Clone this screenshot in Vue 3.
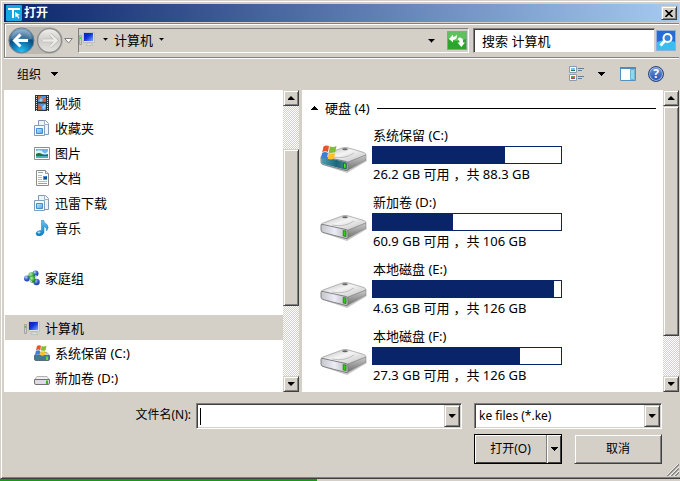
<script setup>
import { ref } from 'vue'

const libraries = [
  { name: '视频', icon: 'film' },
  { name: '收藏夹', icon: 'folderdoc' },
  { name: '图片', icon: 'picture' },
  { name: '文档', icon: 'document' },
  { name: '迅雷下载', icon: 'folderdoc' },
  { name: '音乐', icon: 'music' },
]
const volumes = [
  { name: '系统保留 (C:)', icon: 'sysdisk' },
  { name: '新加卷 (D:)', icon: 'smalldisk' },
]
const drives = [
  { name: '系统保留 (C:)', free: 26.2, total: 88.3, system: true },
  { name: '新加卷 (D:)', free: 60.9, total: 106 },
  { name: '本地磁盘 (E:)', free: 4.63, total: 126 },
  { name: '本地磁盘 (F:)', free: 27.3, total: 126 },
]
const used = (d) => `${(1 - d.free / d.total) * 100}%`
const query = ref('')
const fileName = ref('')
const fileType = ref('ke')
</script>

<template>
  <svg class="defs" aria-hidden="true">
    <defs>
      <linearGradient id="gTop" x1="0" y1="0" x2="1" y2="1">
        <stop offset="0" stop-color="#b4b4b4" /><stop offset=".45" stop-color="#f4f4f4" /><stop offset="1" stop-color="#bdbdbd" />
      </linearGradient>
      <linearGradient id="gFront" x1="0" y1="0" x2="1" y2="0">
        <stop offset="0" stop-color="#c4c4cc" /><stop offset=".5" stop-color="#ececf6" /><stop offset="1" stop-color="#b4b4bc" />
      </linearGradient>
      <linearGradient id="gTeal" x1="0" y1="0" x2="1" y2="0">
        <stop offset="0" stop-color="#4d9fb4" /><stop offset=".6" stop-color="#1d6678" /><stop offset="1" stop-color="#4b8d98" />
      </linearGradient>
      <linearGradient id="gSide" x1="0" y1="0" x2="0" y2="1">
        <stop offset="0" stop-color="#c9c9c9" /><stop offset="1" stop-color="#6f6f6f" />
      </linearGradient>
      <linearGradient id="gScreen" x1="0" y1="0" x2="1" y2="1">
        <stop offset="0" stop-color="#0a1cc0" /><stop offset=".45" stop-color="#1130dc" /><stop offset="1" stop-color="#7da4ff" />
      </linearGradient>
      <linearGradient id="gSky" x1="0" y1="0" x2="1" y2="1">
        <stop offset="0" stop-color="#cdeaff" /><stop offset="1" stop-color="#4aa4ee" />
      </linearGradient>
      <linearGradient id="gNote" x1="0" y1="0" x2="0" y2="1">
        <stop offset="0" stop-color="#6cc4ee" /><stop offset="1" stop-color="#087ac6" />
      </linearGradient>
      <radialGradient id="gBack" cx=".5" cy=".95" r=".95">
        <stop offset="0" stop-color="#25c4f0" /><stop offset=".4" stop-color="#0b78b4" /><stop offset=".62" stop-color="#0a4a7c" /><stop offset="1" stop-color="#8fb8d4" />
      </radialGradient>
      <linearGradient id="gFwd" x1="0" y1="0" x2="0" y2="1">
        <stop offset="0" stop-color="#f0efed" /><stop offset=".5" stop-color="#cfcdc9" /><stop offset="1" stop-color="#e6e4e0" />
      </linearGradient>
      <radialGradient id="gBall" cx=".35" cy=".3" r=".8">
        <stop offset="0" stop-color="#b9d0ff" /><stop offset=".5" stop-color="#3a62cc" /><stop offset="1" stop-color="#12318c" />
      </radialGradient>
      <radialGradient id="gGreenBall" cx=".35" cy=".3" r=".8">
        <stop offset="0" stop-color="#b4f09c" /><stop offset=".6" stop-color="#2ea030" /><stop offset="1" stop-color="#13661c" />
      </radialGradient>
    </defs>
    <symbol id="flag" viewBox="0 0 16 15">
      <path d="M2.500 1.500Q5-.3 8 1L7 7Q4 5.500 1.200 7.200z" fill="#e4562a" />
      <path d="M8.800 1.300Q12 2.700 15.500 1L14.300 7Q11 8.500 7.900 7.300z" fill="#84bc34" />
      <path d="M1 8Q4 6.300 6.900 7.900L6 13.500Q3 12.200 0 14z" fill="#3d7fd8" />
      <path d="M7.700 8.200Q11 9.500 14.100 8L13 13.600Q10 15.300 6.700 13.800z" fill="#fcc02c" />
    </symbol>
    <symbol id="drive" viewBox="0 0 48 28">
      <path d="M3 18L27 26 47 14 45 11 26 22z" fill="#000" opacity=".22" />
      <path d="M1 10Q1 8.500 3 8L22 1Q25-.2 28 .8L44 5.500Q46 6.500 46 8L27 15.500z" fill="url(#gTop)" stroke="#8b8b8b" stroke-width=".6" />
      <path d="M27 15.500L46 8V13L27 23.500z" fill="url(#gSide)" stroke="#777" stroke-width=".5" />
      <path d="M1 10.500Q1 9 3 9.500L26 14.500Q28 15 28 17V22Q28 24 26 23.500L3 17.500Q1 17 1 15z" fill="url(#gFront)" stroke="#777" stroke-width=".9" />
      <path d="M12 10Q25 12.500 34 6" fill="none" stroke="#aaa" stroke-width=".7" />
      <ellipse cx="25" cy="2.200" rx="2.800" ry="1" fill="#666" />
      <path d="M23.200 15.500L26 16V21.500L23.200 21z" fill="#32ce0e" stroke="#246b16" stroke-width=".7" />
    </symbol>
    <symbol id="sysdrive" viewBox="0 0 48 30">
      <use href="#drive" y="2" width="48" height="28" />
      <path d="M1.500 13Q2 11.500 4 12L25.500 17Q27 17.500 27 19V23.500Q27 25 25 24.500L3.500 19Q1.500 18.500 1.500 17z" fill="url(#gTeal)" />
      <path d="M23.500 18L26 18.500V23.500L23.500 23z" fill="#48ee15" stroke="#17541d" stroke-width=".7" />
      <use href="#flag" x="1" y="0" width="16" height="15" />
    </symbol>
    <symbol id="film" viewBox="0 0 16 16">
      <path d="M1 0H15V16H1z" fill="#2c3440" />
      <path d="M4 1H12V7H4zM4 8.500H12V15H4z" fill="#4a96e4" />
      <path d="M4 1H7L6 4 4 5zM8 4L12 2V7H7zM4 9L7 11 8 15H4zM10 10L12 9V12z" fill="#c36443" />
      <path d="M5 5L7 3 9 5 7 7zM8 12L11 9 12 11 10 15z" fill="#8ed2f5" />
      <path d="M2.500 1V16M13.500 1V16" stroke="#d5e6e0" stroke-width="1" stroke-dasharray="1 1" />
    </symbol>
    <symbol id="folderdoc" viewBox="0 0 16 16">
      <path d="M4.500 .5H11.500L14.500 3.500V14.500H4.500z" fill="#eef4fa" stroke="#8199b2" />
      <path d="M10.500 .5V4.500H14.500" stroke="#9fb3c6" fill="#fff" />
      <path d="M.5 5.500H10.500V15.500H.5z" fill="#f6fbff" stroke="#7f9dbc" />
      <path d="M2.500 8.500H8.500V13.500H2.500z" fill="url(#gSky)" stroke="#438dcc" />
    </symbol>
    <symbol id="picture" viewBox="0 0 16 16">
      <path d="M.5 2.500H15.500V14.500H.5z" fill="#fff" stroke="#8d8d8d" />
      <path d="M2 4H14V13H2z" fill="#6eb4ec" />
      <path d="M2 6Q7 4 9 7T14 6V9H2z" fill="#ddf1f8" />
      <path d="M2 9Q5 7 8 9T14 9V11H2z" fill="#276f43" />
      <path d="M2 11H14V13H2z" fill="#49b1b4" />
    </symbol>
    <symbol id="document" viewBox="0 0 16 16">
      <path d="M2.500 .5H11.500L14.500 3.500V15.500H2.500z" fill="#fff" stroke="#8b8b8b" />
      <path d="M11.500 .5V3.500H14.500" fill="#eee" stroke="#999" />
      <path d="M4 2.500H9M4 13.500H13" stroke="#86b09c" />
      <path d="M4 5.500H8M4 7.500H8M4 9.500H8M4 11.500H13" stroke="#b5b4da" />
      <path d="M9 6H13V10H9z" fill="#4b9be0" /><path d="M10 7L13 6.500V9H10z" fill="#184e82" />
    </symbol>
    <symbol id="music" viewBox="0 0 16 16">
      <path d="M7.500 0H9.500Q10 3 13 4.500Q15.500 7.500 12.500 11Q13 7.500 10 6.500V12.500Q9 15.500 5.500 16Q2 16 2 13.500Q2.500 10.500 7.500 10.500z" fill="url(#gNote)" stroke="#187cb8" stroke-width=".5" />
      <ellipse cx="5" cy="12.500" rx="1.500" ry="1" fill="#a5e0f8" />
    </symbol>
    <symbol id="homegroup" viewBox="0 0 16 16">
      <circle cx="11.500" cy="3.500" r="3" fill="url(#gBall)" />
      <circle cx="3" cy="8.500" r="3" fill="url(#gBall)" />
      <circle cx="12.500" cy="12" r="3.200" fill="url(#gBall)" />
      <circle cx="7.500" cy="5.500" r="3.200" fill="url(#gGreenBall)" />
      <circle cx="8.500" cy="9.500" r="3.200" fill="url(#gGreenBall)" />
      <path d="M12 5V9M5 10L8 12" stroke="#c8dafa" stroke-width="1.200" />
    </symbol>
    <symbol id="computer" viewBox="0 0 16 16">
      <path d="M4.500 1.500H15.500V11.500H4.500z" fill="#dedede" stroke="#c1c1c1" />
      <path d="M5 2H14V10H5z" fill="url(#gScreen)" />
      <path d="M8.500 12H12L14 14.500H7z" fill="#ddd" stroke="#aaa" stroke-width=".5" />
      <path d="M.5 4.500H2.500V13.500H.5z" fill="#ccc" stroke="#999" stroke-width=".8" />
      <path d="M.8 6H2.200V8H.8z" fill="#39dd28" />
    </symbol>
    <symbol id="smalldisk" viewBox="0 0 16 16">
      <path d="M3 6.500H13L15.500 10H.5z" fill="#eee" stroke="#a0a0a0" stroke-width=".8" />
      <path d="M.5 9.500H15.500V13Q15.500 14.500 14 14.500H2Q.5 14.500 .5 13z" fill="#dcdce4" stroke="#727272" />
      <path d="M12 10.500H14V14H12z" fill="#35bd22" />
    </symbol>
    <symbol id="sysdisk" viewBox="0 0 16 16">
      <path d="M3 7.500H13L15.500 10.500H.5z" fill="#c9d2d8" stroke="#8c9a9e" stroke-width=".8" />
      <path d="M.5 10.500H15.500V14Q15.500 15.500 14 15.500H2Q.5 15.500 .5 14z" fill="#3d7c94" stroke="#566e7a" />
      <path d="M12 11.500H14V15H12z" fill="#57dc28" />
      <use href="#flag" x="1" y="0" width="12" height="11" />
    </symbol>
  </svg>

  <main class="dialog">
    <header class="titlebar">
      <svg class="app-icon" viewBox="0 0 16 16" aria-hidden="true">
        <rect width="16" height="16" rx="1" fill="#16a5de" />
        <path d="M2 4H14M7 4V13" stroke="#fff" stroke-width="2" fill="none" />
        <path d="M9 7L14 10 11.800 10.500 13.500 13 12.500 13.700 11 11.200 9.500 12.500z" fill="#fff" />
      </svg>
      <h1>打开</h1>
      <button class="close raised" aria-label="关闭">
        <svg width="8" height="7" viewBox="0 0 8 7"><path d="M.5 0L7.500 7M7.500 0L.5 7" stroke="#000" stroke-width="1.600" /></svg>
      </button>
    </header>

    <nav class="navbar">
      <div class="travel">
        <button class="plain" aria-label="后退">
          <svg width="27" height="27" viewBox="0 0 27 27">
            <circle cx="13.500" cy="13.500" r="12.500" fill="url(#gBack)" stroke="#697c8c" />
            <path d="M3 12Q4 3 13.500 3T24 12Q14 15 3 12z" fill="#fff" opacity=".22" />
            <path d="M12.500 7.500L6.500 13.500 12.500 19.500M7 13.500H20" fill="none" stroke="#fff" stroke-width="3" />
          </svg>
        </button>
        <button class="plain" aria-label="前进">
          <svg width="27" height="27" viewBox="0 0 27 27">
            <circle cx="13.500" cy="13.500" r="12" fill="url(#gFwd)" stroke="#8d8d8b" stroke-width="1.300" />
            <path d="M14.500 7.500L20.500 13.500 14.500 19.500M20 13.500H7" fill="none" stroke="#b5b3b0" stroke-width="3.600" />
            <path d="M14.500 7.500L20.500 13.500 14.500 19.500M20 13.500H7" fill="none" stroke="#eceae7" stroke-width="2.400" />
          </svg>
        </button>
      </div>
      <button class="plain recent" aria-label="最近的位置">
        <svg width="9" height="6" viewBox="0 0 9 6"><path d="M.7 .5H8.300L4.500 5z" fill="#fff" stroke="#7d7d7d" /></svg>
      </button>
      <div class="address">
        <svg class="icon" aria-hidden="true"><use href="#computer" /></svg>
        <button class="plain crumb-arrow" aria-label="展开"><i class="tri small"></i></button>
        <button class="plain crumb">计算机<i class="tri small"></i></button>
        <button class="plain history" aria-label="以前的位置"><i class="tri"></i></button>
        <button class="plain" aria-label="刷新">
          <svg class="refresh" viewBox="0 0 20 19">
            <rect x=".5" y=".5" width="19" height="18" fill="#2ca52c" stroke="#83a988" />
            <path d="M1 1H19V8Q10 12 1 8z" fill="#8ad886" opacity=".55" />
            <path d="M2 8L6 3.500V6Q9 5.500 9.500 3.500Q11 8.500 6 9V11.500z" fill="#fff" />
            <path d="M18 11.500H16V9Q15.500 6.500 12 6.500L10.500 8.500Q12.500 8.500 12.500 11.500H10.500L14.300 16z" fill="#fff" />
          </svg>
        </button>
      </div>
      <form class="search" @submit.prevent>
        <input v-model="query" type="text" aria-label="搜索" placeholder="搜索 计算机" />
        <button class="plain" aria-label="搜索">
          <svg width="20" height="21" viewBox="0 0 20 21">
            <rect x=".5" y=".5" width="19" height="20" fill="#246cd4" stroke="#8bb0dd" />
            <path d="M1 12Q10 8 19 12V20H1z" fill="#3bbdf0" />
            <circle cx="11.500" cy="8" r="4" fill="#3b82dd" stroke="#fff" stroke-width="2" />
            <path d="M8.500 11L4.500 15.500" stroke="#fff" stroke-width="3" />
          </svg>
        </button>
      </form>
    </nav>

    <div class="toolbar">
      <button class="plain organize">组织<i class="tri"></i></button>
      <button class="plain" aria-label="视图">
        <svg width="17" height="16" viewBox="0 0 17 16">
          <path d="M.5 .5H7.500V6.500H.5zM.5 8.500H7.500V14.500H.5z" fill="#fff" stroke="#8d9cac" />
          <path d="M2 2H6V4H2z" fill="#79c5ee" /><path d="M2 4H6V5H2z" fill="#26745a" />
          <path d="M2 10H4V12H2z" fill="#4eaa41" /><path d="M4 10H6V12H4z" fill="#e26638" /><path d="M2 12H4V13H2z" fill="#cc3e3c" /><path d="M4 12H6V13H4z" fill="#366fc5" />
          <path d="M9 2.500H15M9 4.500H13M9 10.500H15M9 12.500H13" stroke="#687f98" />
        </svg>
      </button>
      <button class="plain view-more" aria-label="更多选项"><i class="tri"></i></button>
      <button class="plain preview" aria-label="预览窗格">
        <svg width="16" height="14" viewBox="0 0 16 14">
          <path d="M.5 .5H15.500V13.500H.5z" fill="#fff" stroke="#5790b8" /><path d="M0 0H16V2H0z" fill="#4f8db8" />
          <path d="M10.500 2.500H14.500V12.500H10.500z" fill="#8ed9ef" stroke="#6fb4d0" />
        </svg>
      </button>
      <button class="plain" aria-label="帮助">
        <span class="help">?</span>
      </button>
    </div>

    <div class="content">
      <aside class="pane tree">
        <ul>
          <li v-for="item in libraries" :key="item.name" class="child">
            <svg class="icon" aria-hidden="true"><use :href="'#' + item.icon" /></svg>{{ item.name }}
          </li>
          <li class="gap"><svg class="icon" aria-hidden="true"><use href="#homegroup" /></svg>家庭组</li>
          <li class="gap selected"><svg class="icon" aria-hidden="true"><use href="#computer" /></svg>计算机</li>
          <li v-for="item in volumes" :key="item.name" class="child">
            <svg class="icon" aria-hidden="true"><use :href="'#' + item.icon" /></svg>{{ item.name }}
          </li>
        </ul>
        <div class="scrollbar">
          <button class="raised" aria-label="向上滚动"><i class="tri up"></i></button>
          <div class="track"><div class="thumb raised tree-thumb"></div></div>
          <button class="raised" aria-label="向下滚动"><i class="tri"></i></button>
        </div>
      </aside>

      <section class="pane files">
        <div class="listing">
          <h2><i class="tri up"></i>硬盘 (4)</h2>
          <article v-for="drive in drives" :key="drive.name" class="drive">
            <svg v-if="drive.system" class="disk system" aria-hidden="true"><use href="#sysdrive" /></svg>
            <svg v-else class="disk" aria-hidden="true"><use href="#drive" /></svg>
            <div class="info">
              <p>{{ drive.name }}</p>
              <div class="meter"><div class="fill" :style="{ width: used(drive) }"></div></div>
              <p>{{ drive.free }} GB 可用<span class="comma">，</span>共 {{ drive.total }} GB</p>
            </div>
          </article>
        </div>
        <div class="scrollbar">
          <button class="raised" aria-label="向上滚动"><i class="tri up"></i></button>
          <div class="track"><div class="thumb raised files-thumb"></div></div>
          <button class="raised" aria-label="向下滚动"><i class="tri"></i></button>
        </div>
      </section>
    </div>

    <footer class="footer">
      <label for="file-name">文件名(N):</label>
      <div class="field name-field">
        <span class="caret"></span>
        <input id="file-name" v-model="fileName" type="text" />
        <button class="raised drop" aria-label="显示文件名"><i class="tri"></i></button>
      </div>
      <div class="field">
        <select v-model="fileType" aria-label="文件类型"><option value="ke">ke files (*.ke)</option></select>
        <span class="raised drop"><i class="tri"></i></span>
      </div>
      <div class="actions">
        <div class="split">
          <button class="open">打开(O)</button>
          <button class="open-more" aria-label="打开方式"><i class="tri"></i></button>
        </div>
        <button class="raised cancel">取消</button>
      </div>
      <svg class="grip" viewBox="0 0 12 12" aria-hidden="true">
        <path d="M0 12L12 0M4 12L12 4M8 12L12 8" stroke="#808080" stroke-width="1.600" />
        <path d="M-1 12L12-1M3 12L12 3M7 12L12 7" stroke="#fff" stroke-width=".8" />
      </svg>
    </footer>
  </main>
  <div class="progress"><div class="done"></div></div>
</template>

<style>
body {
  background: #d4d0c8;
  overflow: hidden;
}
</style>

<style scoped>
.dialog {
  box-sizing: border-box;
  height: calc(100vh - 2px);
  display: flex;
  flex-direction: column;
  padding: 3px 1px 0 3px;
  background: #d4d0c8;
  border: 1px solid #d4d0c8;
  border-right: 0;
  border-bottom-color: #404040;
  box-shadow: inset 1px 1px #fff, inset 0 -1px #808080;
  color: #000;
}
.dialog, button, input, select {
  font-family: "Noto Sans", "Noto Sans CJK SC", sans-serif;
  font-size: 13px;
}
.defs {
  position: absolute;
  width: 0;
  height: 0;
}
svg { display: block; flex: none; }
h1, h2, p, ul { margin: 0; padding: 0; font-weight: normal; }
button { padding: 0; color: #000; }
input, select {
  flex: 1;
  min-width: 0;
  padding: 0;
  border: 0;
  outline: 0;
  background: #fff;
  color: #000;
  appearance: none;
}
input::placeholder { color: #000; opacity: 1; }
.plain {
  display: flex;
  align-items: center;
  border: 0;
  background: none;
}
.raised {
  box-sizing: border-box;
  display: flex;
  align-items: center;
  justify-content: center;
  background: #d4d0c8;
  border: 1px solid;
  border-color: #d4d0c8 #404040 #404040 #d4d0c8;
  box-shadow: inset 1px 1px #fff, inset -1px -1px #808080;
}
.tri {
  flex: none;
  width: 7px;
  height: 4px;
  background: #000;
  clip-path: polygon(0 0, 7px 0, 7px 1px, 6px 1px, 6px 2px, 5px 2px, 5px 3px, 4px 3px, 4px 4px, 3px 4px, 3px 3px, 2px 3px, 2px 2px, 1px 2px, 1px 1px, 0 1px);
}
.tri.up {
  clip-path: polygon(0 4px, 7px 4px, 7px 3px, 6px 3px, 6px 2px, 5px 2px, 5px 1px, 4px 1px, 4px 0, 3px 0, 3px 1px, 2px 1px, 2px 2px, 1px 2px, 1px 3px, 0 3px);
}
.tri.small {
  width: 5px;
  height: 3px;
  clip-path: polygon(0 0, 5px 0, 5px 1px, 4px 1px, 4px 2px, 3px 2px, 3px 3px, 2px 3px, 2px 2px, 1px 2px, 1px 1px, 0 1px);
}
.icon { width: 16px; height: 16px; }

.titlebar {
  display: flex;
  align-items: center;
  height: 18px;
  padding: 0 2px;
  background: linear-gradient(90deg, #0a246a, #a6caf0);
}
.app-icon { width: 16px; height: 16px; }
.titlebar h1 {
  flex: 1;
  margin-left: 2px;
  line-height: 18px;
  font-size: 12px;
  font-weight: bold;
  color: #fff;
}
.close { width: 16px; height: 14px; }

.navbar {
  box-sizing: border-box;
  display: flex;
  align-items: center;
  height: 35px;
  margin-top: 1px;
  padding: 0 3px;
  border: 1px solid #808080;
  border-right: 0;
  box-shadow: inset 1px 1px #fff, 0 1px #fff;
}
.travel {
  display: flex;
  gap: 1px;
  border-radius: 14px;
  background: #bcb9b3;
}
.recent { margin: 0 5px 0 1px; }
.address {
  box-sizing: border-box;
  flex: 1;
  display: flex;
  align-items: center;
  height: 25px;
  border: 1px solid;
  border-color: #808080 #fff #fff #808080;
}
.address .icon { margin-bottom: 3px; }
.crumb-arrow { margin-left: 8px; padding-bottom: 3px; }
.crumb { flex: 1; gap: 6px; margin-left: 6px; padding-bottom: 3px; }
.history { margin-right: 12px; }
.refresh { width: 20px; height: 19px; margin-right: 1px; }
.search {
  display: flex;
  align-items: center;
  gap: 1px;
  width: 203px;
  margin-left: 4px;
}
.search input {
  box-sizing: border-box;
  height: 25px;
  padding-left: 8px;
  border: 1px solid;
  border-color: #808080 #d4d0c8 #d4d0c8 #808080;
  box-shadow: inset 1px 1px #404040;
}

.toolbar {
  display: flex;
  align-items: center;
  height: 32px;
  padding: 0 15px 0 13px;
}
.organize { gap: 10px; margin-right: auto; font-size: 12px; }
.view-more { margin-left: 12px; }
.preview { margin: 0 12px 0 15px; }
.help {
  box-sizing: border-box;
  width: 16px;
  height: 16px;
  border: 1px solid #25457f;
  border-radius: 50%;
  background: linear-gradient(#6f95dc, #2350ae);
  box-shadow: inset 0 0 0 1px #a5b9dd;
  color: #fff;
  font-size: 12px;
  font-weight: bold;
  line-height: 14px;
}

.content {
  flex: 1;
  min-height: 0;
  display: flex;
  gap: 3px;
}
.pane {
  display: flex;
  overflow: hidden;
  background: #fff;
}
.tree { width: 295px; }
.tree ul {
  flex: 1;
  list-style: none;
}
.tree li {
  display: flex;
  align-items: center;
  gap: 5px;
  height: 25px;
  padding-left: 20px;
  line-height: 18px;
}
.tree li.child { padding-left: 30px; }
.tree li.gap { margin-top: 25px; }
.tree li.selected { background: #d4d0c8; margin-left: 1px; padding-left: 19px; }
.files { flex: 1; }
.listing {
  flex: 1;
  padding: 9px 7px 0 9px;
}
.listing h2 {
  display: flex;
  align-items: center;
  gap: 7px;
  margin-bottom: 9px;
  font-size: 13px;
  line-height: 18px;
}
.listing h2::after {
  content: "";
  flex: 1;
  height: 1px;
  background: #000;
}
.drive {
  display: flex;
  gap: 4px;
  height: 67px;
  padding-left: 9px;
}
.disk {
  width: 48px;
  height: 28px;
  margin-top: 22px;
}
.disk.system { height: 30px; margin-top: 19px; }
.info { flex: 1; }
.info p { padding-left: 1px; line-height: 18px; }
.comma {
  display: inline-block;
  box-sizing: border-box;
  width: 17px;
  padding-left: 4px;
}
.meter {
  box-sizing: border-box;
  width: 190px;
  height: 18px;
  margin: 2px 0 1px;
  border: 1px solid #0a246a;
}
.fill { height: 100%; background: #0a246a; }

.scrollbar {
  display: flex;
  flex-direction: column;
  width: 16px;
}
.scrollbar button { height: 16px; }
.track {
  flex: 1;
  display: flex;
  flex-direction: column;
  background: repeating-conic-gradient(#fff 0 25%, #d4d0c8 0 50%) 0 0 / 2px 2px;
}
.tree-thumb { height: 58%; margin-top: 43px; }
.files-thumb { height: 85%; }

.footer {
  position: relative;
  display: grid;
  grid-template-columns: 187px 1fr 188px;
  row-gap: 5px;
  padding: 11px 17px 14px 0;
  align-items: center;
}
.footer label, .footer select, .footer button { font-size: 12px; }
.footer label { line-height: 18px; padding-bottom: 2px; text-align: right; }
.field {
  box-sizing: border-box;
  display: flex;
  align-items: center;
  height: 26px;
  padding: 1px;
  background: #fff;
  border: 1px solid;
  border-color: #808080 #fff #fff #808080;
  box-shadow: inset 1px 1px #404040, inset -1px -1px #d4d0c8;
}
.name-field { margin: 0 12px 0 5px; }
.field select { padding: 0 0 2px 3px; }
.drop { width: 16px; height: 22px; }
.caret { width: 1px; height: 17px; margin-left: 2px; background: #000; }
.actions {
  grid-column: 3;
  display: flex;
  gap: 12px;
}
.split, .cancel { flex: 1; height: 30px; }
.split {
  box-sizing: border-box;
  display: flex;
  border: 1px solid #000;
  box-shadow: inset 1px 1px #fff, inset -1px -1px #404040;
}
.open, .cancel { padding-bottom: 3px; }
.open, .open-more { border: 0; background: none; }
.open { flex: 1; border-right: 1px solid #808080; }
.open-more {
  display: flex;
  align-items: center;
  justify-content: center;
  width: 14px;
  border-left: 1px solid #fff;
}
.grip {
  position: absolute;
  right: 0;
  bottom: 2px;
  width: 12px;
  height: 12px;
}
.progress { height: 2px; background: #d4d0c8; }
.done { width: 46.6%; height: 2px; background: #149a14; }
</style>
